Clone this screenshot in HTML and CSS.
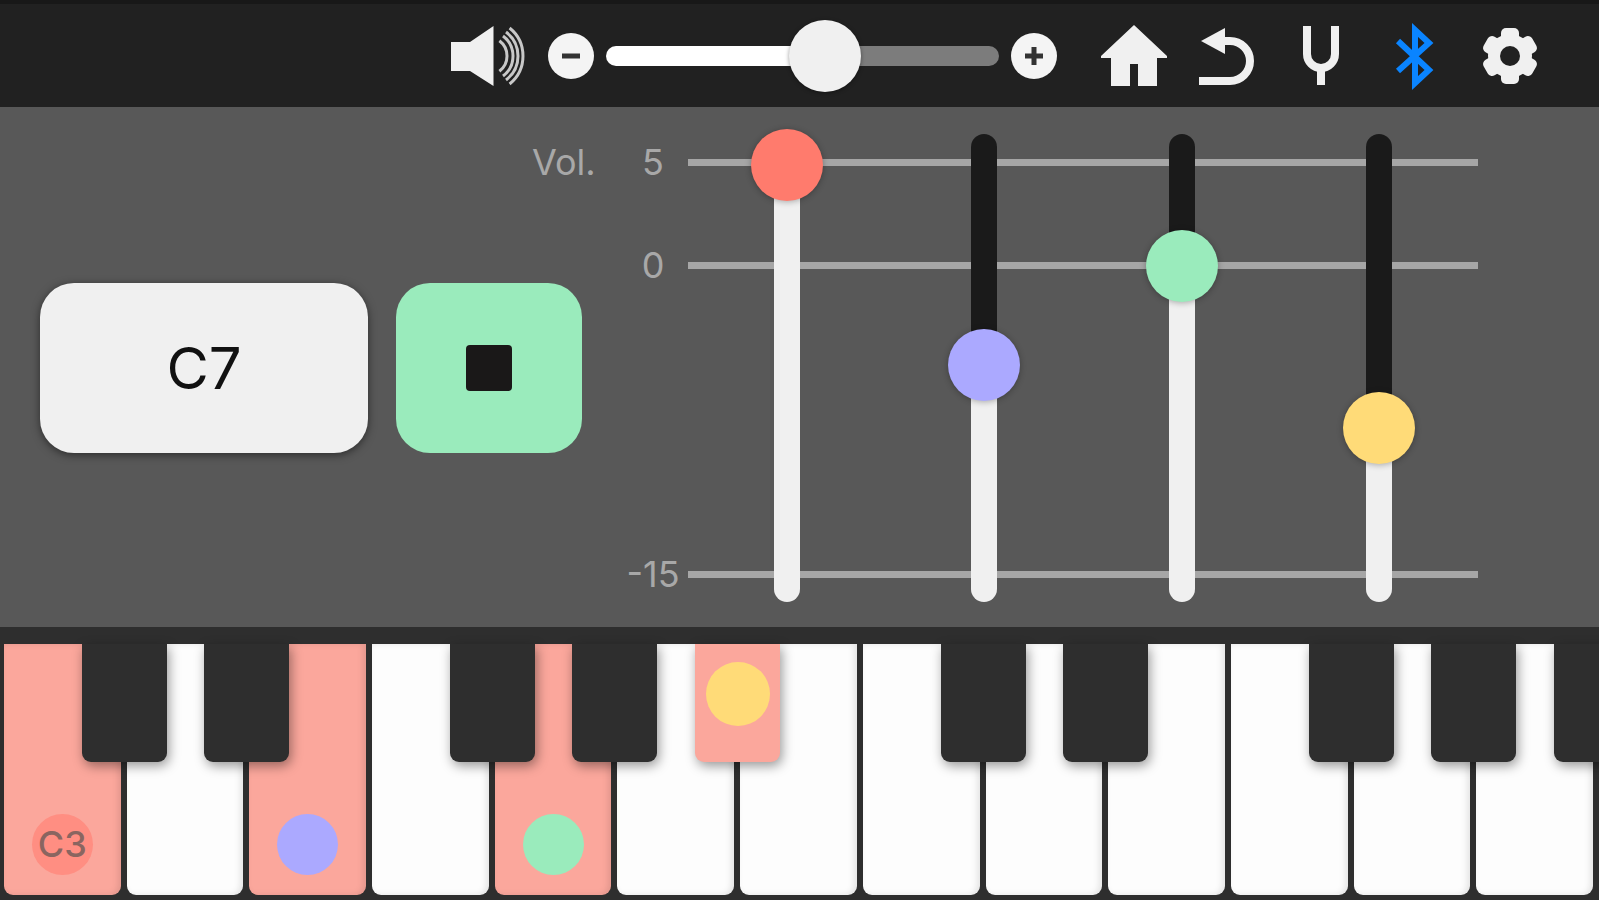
FILE: index.html
```html
<!DOCTYPE html>
<html lang="en">

<head>
    <meta charset="UTF-8">
    <meta name="viewport" content="width=device-width, initial-scale=1.0">
    <title>Chord keyboard</title>
    <link rel="stylesheet" href="styles.css">
</head>

<body>
    <header class="topbar">
        <svg class="speaker" viewBox="0 0 76 70" aria-hidden="true">
            <path fill="#f0f0f0" d="M1 21H20L43.500 5V65L20 50H1Z"/>
            <path fill="none" stroke="#c8c8c8" stroke-width="3" d="M49.400 19.800A19 19 0 0 1 49.400 50.200M53 15A25 25 0 0 1 53 55M56 11A30 30 0 0 1 56 59M59.600 7A36 36 0 0 1 59.600 63"/>
        </svg>
        <div class="volume">
            <button class="round" aria-label="Volume down">
                <svg viewBox="0 0 46 46"><path d="M14 23H32"/></svg>
            </button>
            <input class="master" type="range" min="0" max="100" value="57" aria-label="Master volume" style="--level: 57%">
            <button class="round" aria-label="Volume up">
                <svg viewBox="0 0 46 46"><path d="M14 23H32M23 14V32"/></svg>
            </button>
        </div>
        <nav class="tools">
            <button class="tool" aria-label="Home">
                <svg viewBox="0 0 72 70"><path fill="#f0f0f0" d="M36 4L69 35V37H59V65H40V43H32V65H13V37H3V35Z"/></svg>
            </button>
            <button class="tool" aria-label="Undo">
                <svg viewBox="0 0 72 70">
                    <path fill="none" stroke="#f0f0f0" stroke-width="8" d="M30 20H38a20 20 0 0 1 0 40H7"/>
                    <path fill="#f0f0f0" d="M9 20L33 7V33Z"/>
                </svg>
            </button>
            <button class="tool" aria-label="Tuning">
                <svg viewBox="0 0 72 70"><path fill="none" stroke="#f0f0f0" stroke-width="8" d="M21 5V33a14 14 0 0 0 28 0V5M35 46V64"/></svg>
            </button>
            <button class="tool" aria-label="Bluetooth">
                <svg viewBox="0 0 72 70"><path fill="none" stroke="#0a84ff" stroke-width="6" d="M18 20L49 49L35 62V9L49 22L18 50"/></svg>
            </button>
            <button class="tool" aria-label="Settings">
                <svg viewBox="0 0 72 70">
                    <g fill="#f0f0f0">
                        <circle cx="36" cy="35" r="22"/>
                        <rect x="27" y="7" width="18" height="56" rx="5"/>
                        <rect x="27" y="7" width="18" height="56" rx="5" transform="rotate(60 36 35)"/>
                        <rect x="27" y="7" width="18" height="56" rx="5" transform="rotate(120 36 35)"/>
                    </g>
                    <circle cx="36" cy="35" r="10" fill="#212121"/>
                </svg>
            </button>
        </nav>
    </header>

    <main class="panel">
        <button class="pad chord">C7</button>
        <button class="pad stop" aria-label="Stop"><span class="stop-icon"></span></button>

        <section class="mixer">
            <div class="scale">
                <div class="tick tick-5"><span class="caption">Vol.</span><span class="number">5</span><i class="line"></i></div>
                <div class="tick tick-0"><span class="caption"></span><span class="number">0</span><i class="line"></i></div>
                <div class="tick tick-15"><span class="caption"></span><span class="number">-15</span><i class="line"></i></div>
            </div>
            <div class="faders">
                <div class="fader red" style="--level: 98%">
                    <input type="range" min="-15" max="5" step="any" value="4.85" aria-label="Red note volume">
                </div>
                <div class="fader purple" style="--level: 51%">
                    <input type="range" min="-15" max="5" step="any" value="-4.85" aria-label="Purple note volume">
                </div>
                <div class="fader green" style="--level: 72%">
                    <input type="range" min="-15" max="5" step="any" value="-0.05" aria-label="Green note volume">
                </div>
                <div class="fader yellow" style="--level: 37%">
                    <input type="range" min="-15" max="5" step="any" value="-7.9" aria-label="Yellow note volume">
                </div>
            </div>
        </section>
    </main>

    <div class="keyboard">
        <div class="slot">
            <button class="white on"><span class="dot red">C3</span></button>
            <button class="black" aria-label="C#3"></button>
        </div>
        <div class="slot">
            <button class="white" aria-label="D3"></button>
            <button class="black" aria-label="D#3"></button>
        </div>
        <div class="slot">
            <button class="white on" aria-label="E3"><span class="dot purple"></span></button>
        </div>
        <div class="slot">
            <button class="white" aria-label="F3"></button>
            <button class="black" aria-label="F#3"></button>
        </div>
        <div class="slot">
            <button class="white on" aria-label="G3"><span class="dot green"></span></button>
            <button class="black" aria-label="G#3"></button>
        </div>
        <div class="slot">
            <button class="white" aria-label="A3"></button>
            <button class="black on" aria-label="A#3"><span class="dot yellow"></span></button>
        </div>
        <div class="slot">
            <button class="white" aria-label="B3"></button>
        </div>
        <div class="slot">
            <button class="white" aria-label="C4"></button>
            <button class="black" aria-label="C#4"></button>
        </div>
        <div class="slot">
            <button class="white" aria-label="D4"></button>
            <button class="black" aria-label="D#4"></button>
        </div>
        <div class="slot">
            <button class="white" aria-label="E4"></button>
        </div>
        <div class="slot">
            <button class="white" aria-label="F4"></button>
            <button class="black" aria-label="F#4"></button>
        </div>
        <div class="slot">
            <button class="white" aria-label="G4"></button>
            <button class="black" aria-label="G#4"></button>
        </div>
        <div class="slot">
            <button class="white" aria-label="A4"></button>
            <button class="black" aria-label="A#4"></button>
        </div>
    </div>
    <script src="app.js"></script>
</body>

</html>
```

FILE: styles.css
```css
* {
    box-sizing: border-box;
}

body {
    margin: 0;
    min-height: 100vh;
    display: flex;
    flex-direction: column;
    overflow-x: hidden;
    background-color: #585858;
    font-family: Inter, "Liberation Sans", sans-serif;
}

button {
    margin: 0;
    padding: 0;
    border: none;
    font-family: inherit;
    cursor: pointer;
}

input[type="range"] {
    -webkit-appearance: none;
    appearance: none;
    margin: 0;
    cursor: pointer;
}

.red { --color: #ff7b6d; }
.purple { --color: #aba9ff; }
.green { --color: #9aebbc; }
.yellow { --color: #ffdb78; }

/* top bar */
.topbar {
    display: flex;
    align-items: center;
    gap: 22px;
    height: 107px;
    padding: 0 42px 0 450px;
    border-top: 4px solid #181818;
    background-color: #212121;
}

.speaker {
    flex: none;
    width: 76px;
    height: 70px;
}

.volume {
    flex: 1;
    display: flex;
    align-items: center;
    gap: 12px;
    margin-right: 8px;
}

.round {
    flex: none;
    width: 46px;
    height: 46px;
    border-radius: 50%;
    background-color: #f4f4f4;
}

.round svg {
    display: block;
    fill: none;
    stroke: #333;
    stroke-width: 5;
}

.master {
    flex: 1;
    min-width: 0;
    height: 20px;
    border-radius: 10px;
    background: linear-gradient(to right, #fff var(--level), #7c7c7c var(--level));
}

.master::-webkit-slider-thumb {
    -webkit-appearance: none;
    width: 72px;
    height: 72px;
    border-radius: 50%;
    background-color: #f0f0f0;
    box-shadow: 0 1px 4px rgba(0, 0, 0, 0.4);
}

.tools {
    display: flex;
}

.tool {
    width: 94px;
    background: none;
}

.tool svg {
    display: block;
    width: 72px;
    height: 70px;
    margin: 0 auto;
}

/* chord buttons and mixer */
.panel {
    flex: 1 0 auto;
    display: grid;
    grid-template-columns: 328fr 28px 136fr 50fr 106px 790fr;
    align-items: center;
    padding: 19px 121px 17px 40px;
}

.pad {
    grid-row: 1;
    height: 170px;
    border-radius: 34px;
}

.chord {
    grid-column: 1;
    background-color: #f0f0f0;
    box-shadow: 0 2px 8px rgba(0, 0, 0, 0.5);
    color: #111;
    font-size: 58px;
}

.stop {
    grid-column: 3 / 5;
    background-color: #9aebbc;
}

.stop-icon {
    display: block;
    width: 46px;
    height: 46px;
    margin: 0 auto;
    border-radius: 4px;
    background-color: #1a1818;
}

/* the caption column reaches in above the stop button */
.mixer {
    grid-column: 4 / -1;
    grid-row: 1;
    display: grid;
    pointer-events: none;
}

.scale,
.faders {
    grid-area: 1 / 1;
}

/* 5 to 0 is a third of 0 to -15 */
.scale {
    display: grid;
    grid-template-rows: 36px 103px 309px 36px;
}

.tick {
    display: grid;
    grid-template-columns: 86px 70px 1fr;
    grid-template-rows: 0;
    align-items: center;
    height: 0;
    color: #a8a8a8;
    font-size: 36px;
    line-height: 40px;
}

.tick-5 { grid-row: 2; }
.tick-0 { grid-row: 3; }
.tick-15 { grid-row: 4; }

.number {
    text-align: center;
}

.line {
    height: 7px;
    background-color: #a6a6a6;
}

.faders {
    display: grid;
    grid-template-columns: repeat(4, 1fr);
    padding-left: 156px;
}

.fader {
    position: relative;
    display: flex;
    justify-content: center;
}

.fader::before {
    content: "";
    position: absolute;
    top: 8px;
    bottom: 8px;
    width: 26px;
    border-radius: 13px;
    background: linear-gradient(to top, #f0f0f0 var(--level), #1a1a1a var(--level));
}

.fader input {
    position: relative;
    writing-mode: vertical-lr;
    direction: rtl;
    width: 72px;
    background: none;
    pointer-events: auto;
}

.fader input::-webkit-slider-thumb {
    -webkit-appearance: none;
    width: 72px;
    height: 72px;
    border-radius: 50%;
    background-color: var(--color);
    box-shadow: 0 1px 6px rgba(0, 0, 0, 0.3);
}

/* piano */
.keyboard {
    display: grid;
    grid-template-columns: repeat(13, 1fr);
    gap: 6px;
    height: 273px;
    padding: 17px 6px 5px 4px;
    overflow: hidden;
    background-color: #2e2e2e;
}

.slot {
    position: relative;
}

.white {
    display: flex;
    justify-content: center;
    align-items: flex-end;
    width: 100%;
    height: 100%;
    padding-bottom: 20px;
    border-radius: 0 0 9px 9px;
    background-color: #fdfdfd;
    box-shadow: inset -3px 0 6px rgba(0, 0, 0, 0.1);
}

.black {
    position: absolute;
    z-index: 1;
    top: 0;
    right: -46px;
    display: flex;
    justify-content: center;
    align-items: flex-end;
    width: 85px;
    height: 118px;
    padding-bottom: 36px;
    border-radius: 0 0 9px 9px;
    background-color: #2e2e2e;
    box-shadow: 2px 4px 12px rgba(0, 0, 0, 0.4);
}

.on {
    background-color: #fba79c;
}

.dot {
    width: 61px;
    height: 61px;
    border-radius: 50%;
    background-color: var(--color);
    color: #8a6560;
    font-size: 36px;
    font-weight: 500;
    line-height: 61px;
    text-align: center;
}

.white .dot.red {
    background-color: #ff8e82;
}

.black .dot {
    width: 64px;
    height: 64px;
}
```

FILE: app.js
```js
// keep the filled part of each track in step with its knob
document.querySelectorAll('input[type="range"]').forEach(input => {
    input.addEventListener('input', () => {
        let level = (input.value - input.min) / (input.max - input.min) * 100
        let target = input.classList.contains('master') ? input : input.parentElement
        target.style.setProperty('--level', level + '%')
    })
})
```
